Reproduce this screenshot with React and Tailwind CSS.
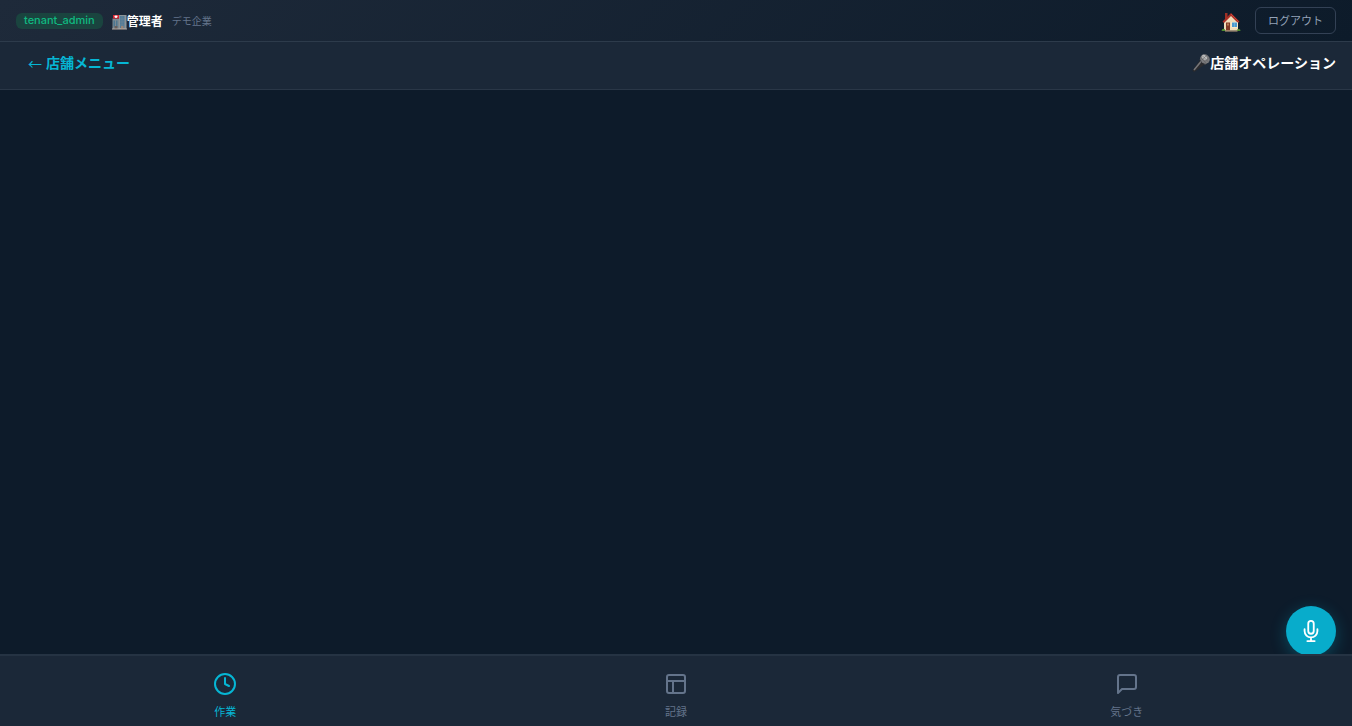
import React, { useState } from "react";
import clsx from "clsx";

function HospitalIcon() {
  return (
    <svg viewBox="0 0 30 32" className="w-[15px] h-4 shrink-0" aria-hidden="true">
      <rect x="1" y="9" width="15" height="21" fill="#7d8a92" />
      <rect x="14" y="2" width="15" height="28" fill="#8c9599" />
      <rect x="16" y="4" width="9" height="24" fill="#527b96" />
      <path d="M20 4v24M16 10h9M16 16h9M16 22h9" stroke="#718b9a" strokeWidth="1" />
      <rect x="3" y="13" width="3" height="12" fill="#4d7690" />
      <rect x="8" y="13" width="3" height="12" fill="#4d7690" />
      <rect x="2" y="2" width="12" height="7" fill="#d9202e" />
      <path d="M8 3v5M5 5h6" stroke="#fff" strokeWidth="3" />
      <rect x="5" y="24" width="6" height="6" fill="#675f5d" />
      <rect x="18" y="24" width="5" height="6" fill="#9b8577" />
      <path d="M0 30h30" stroke="#b6aaa2" strokeWidth="2" />
    </svg>
  );
}

function HouseIcon() {
  return (
    <svg viewBox="0 0 40 40" className="w-5 h-5" aria-hidden="true">
      <rect x="8" y="2" width="5" height="12" fill="#9e3025" />
      <path d="M20 5 34 19v18H6V19z" fill="#f0dcb9" />
      <path d="M20 2 37 19l-3 3L20 8 6 22l-3-3z" fill="#a92d25" />
      <path d="M20 4 35 19" stroke="#cf4538" strokeWidth="2" />
      <rect x="10" y="21" width="8" height="16" fill="#803a26" />
      <rect x="12" y="23" width="4" height="4" fill="#b57b54" />
      <rect x="21" y="20" width="12" height="11" fill="#fff1d5" />
      <rect x="22" y="21" width="10" height="9" fill="#4b9ad0" />
      <path d="M27 21v9" stroke="#8ec4e1" />
      <path d="M1 38q1-6 6-4l2 4zM31 38q1-5 5-4 3 0 3 4z" fill="#4f8b2e" />
      <path d="M8 38h25" stroke="#c3a482" strokeWidth="2" />
    </svg>
  );
}

function MicEmoji() {
  return (
    <svg viewBox="0 0 36 36" className="w-[18px] h-[18px] shrink-0" aria-hidden="true">
      <path d="m16 12 9 9L6 35q-4 1-5-2z" fill="#2b2b2e" />
      <path d="M18 15 4 32" stroke="#77777a" strokeWidth="3" />
      <path d="m15 11 11 11 4-3-12-12z" fill="#454547" />
      <ellipse cx="26" cy="10" rx="10" ry="9" transform="rotate(42 26 10)" fill="#7b7b7d" />
      <ellipse cx="25" cy="7" rx="6" ry="4" transform="rotate(42 25 7)" fill="#bdbdbd" />
      <path d="m21 4 12 12M18 8l11 11M30 2 19 13M34 7l-10 10" stroke="#5c5c5e" strokeWidth="1" />
    </svg>
  );
}

function StrokeIcon({ className, children }) {
  return (
    <svg
      viewBox="0 0 24 24"
      fill="none"
      stroke="currentColor"
      strokeWidth="2"
      strokeLinecap="round"
      strokeLinejoin="round"
      className={className}
      aria-hidden="true"
    >
      {children}
    </svg>
  );
}

const tabs = [
  {
    id: "work",
    label: "作業",
    icon: (
      <>
        <circle cx="12" cy="12" r="10" />
        <path d="M12 6v6l4 2" />
      </>
    ),
  },
  {
    id: "records",
    label: "記録",
    icon: (
      <>
        <rect x="3" y="3" width="18" height="18" rx="2" />
        <path d="M3 9h18M9 21V9" />
      </>
    ),
  },
  {
    id: "notes",
    label: "気づき",
    icon: <path d="M21 15a2 2 0 0 1-2 2H7l-4 4V5a2 2 0 0 1 2-2h14a2 2 0 0 1 2 2z" />,
  },
];

export default function App() {
  const [activeTab, setActiveTab] = useState("work");

  return (
    <div className="min-h-screen flex flex-col bg-[#0d1b2a] text-white font-['Inter','Noto_Sans_CJK_JP',sans-serif]">
      {/* Account bar */}
      <header className="h-[42px] px-4 flex items-center justify-between border-b border-[#2d3b4b] bg-linear-135 from-[#1e2a3a] to-[#0d1b2a]">
        <div className="flex items-center gap-[9px]">
          <span className="px-2 h-4 flex items-center rounded-md bg-[#1a443f] text-[#10b981] text-[11px] font-medium">
            tenant_admin
          </span>
          <span className="pt-[3px] flex items-center text-xs font-bold">
            <HospitalIcon />
            管理者
          </span>
          <span className="pt-0.5 text-[10px] text-[#64748b]">デモ企業</span>
        </div>
        <div className="flex items-center gap-3.5">
          <a href="#home" aria-label="ホーム" className="pt-0.5">
            <HouseIcon />
          </a>
          <button className="h-[27px] px-3 pt-0.5 rounded-md border border-[#334155] text-[11px] text-[#94a3b8]">
            ログアウト
          </button>
        </div>
      </header>

      {/* Page bar */}
      <div className="h-12 pl-7 pr-4 pb-1.5 flex items-center justify-between border-b border-[#2a3747] bg-[#1b2838]">
        <a href="#menu" className="flex items-center gap-1 text-sm font-bold text-[#06b6d4]">
          <span className="font-['Noto_Sans_CJK_JP',sans-serif] font-normal">←</span>
          店舗メニュー
        </a>
        <h1 className="flex items-center text-sm font-bold">
          <MicEmoji />
          店舗オペレーション
        </h1>
      </div>

      <main className="flex-1" />

      <button
        aria-label="音声入力"
        className="fixed right-4 bottom-[70px] w-[50px] h-[50px] rounded-full flex items-center justify-center bg-[#08accb] shadow-[0_4px_16px_rgba(6,182,212,0.3)]"
      >
        <StrokeIcon className="w-[22px] h-[22px]">
          <rect x="9" y="1" width="6" height="14" rx="3" />
          <path d="M19 10v2a7 7 0 0 1-14 0v-2M12 19v4M8 23h8" />
        </StrokeIcon>
      </button>

      {/* Bottom tabs */}
      <nav className="sticky bottom-0 z-10 h-[72px] grid grid-cols-3 border-t-2 border-[#253343] bg-[#1b2838]">
        {tabs.map((tab) => (
          <button
            key={tab.id}
            onClick={() => setActiveTab(tab.id)}
            className={clsx(
              "flex flex-col items-center justify-center gap-2 pt-2.5 text-[11px] leading-4",
              activeTab === tab.id ? "text-[#06b6d4]" : "text-[#64748b]"
            )}
          >
            <StrokeIcon className="w-6 h-6">{tab.icon}</StrokeIcon>
            {tab.label}
          </button>
        ))}
      </nav>
    </div>
  );
}
